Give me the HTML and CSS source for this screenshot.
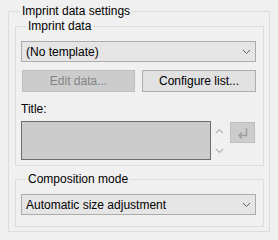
FILE: index.html
```html
<!DOCTYPE html>
<html lang="en">
  <head>
    <meta charset="UTF-8" />
    <title>Imprint data settings</title>
    <link rel="stylesheet" href="styles.css">
  </head>
  <body>
    <fieldset class="group outer">
      <legend>Imprint data settings</legend>

      <fieldset class="group inner">
        <legend>Imprint data</legend>
        <div class="combo">
          <span>(No template)</span>
          <svg class="chevron" width="9" height="6" viewBox="0 0 9 6">
            <polyline points="1,1 4.5,4.5 8,1" fill="none" stroke="#606060" stroke-width="1" />
          </svg>
        </div>

        <div class="buttons">
          <button class="btn disabled">Edit data...</button>
          <button class="btn">Configure list...</button>
        </div>

        <div class="label">Title:</div>
        <div class="title-row">
          <div class="textbox"></div>
          <div class="spin">
            <svg width="9" height="6" viewBox="0 0 9 6">
              <polyline points="1,5 4.5,1.5 8,5" fill="none" stroke="#b4b4b4" stroke-width="1.2" />
            </svg>
            <svg width="9" height="6" viewBox="0 0 9 6">
              <polyline points="1,1 4.5,4.5 8,1" fill="none" stroke="#b4b4b4" stroke-width="1.2" />
            </svg>
          </div>
          <div class="enter">
            <svg width="14" height="12" viewBox="0 0 14 12">
              <polyline points="10.5,1 10.5,8.5 3,8.5" fill="none" stroke="#9c9c9c" stroke-width="1.4" />
              <polyline points="6,5.5 3,8.5 6,11.5" fill="none" stroke="#9c9c9c" stroke-width="1.4" />
            </svg>
          </div>
        </div>
      </fieldset>

      <fieldset class="group inner compose">
        <legend>Composition mode</legend>
        <div class="combo">
          <span>Automatic size adjustment</span>
          <svg class="chevron" width="9" height="6" viewBox="0 0 9 6">
            <polyline points="1,1 4.5,4.5 8,1" fill="none" stroke="#606060" stroke-width="1" />
          </svg>
        </div>
      </fieldset>
    </fieldset>
  </body>
</html>
```

FILE: styles.css
```css
body {
  margin: 0;
  background-color: #f0f0f0;
  font-family: "Liberation Sans", Arial, sans-serif;
  font-size: 12px;
  color: #000;
}

.group {
  margin: 0;
  border: 1px solid #dcdcdc;
  min-width: 0;
}

.group legend {
  padding: 0 2px;
  margin-left: 5px;
  line-height: 14px;
}

.outer {
  margin: 4px 0 0 8px;
  width: 262px;
  box-sizing: border-box;
  padding: 1px 5px 4px 6px;
}

.inner {
  width: 249px;
  box-sizing: border-box;
  padding: 8px 7px 5px 5px;
}

.compose {
  margin-top: 6px;
  padding-bottom: 11px;
}

.combo {
  height: 21px;
  box-sizing: border-box;
  border: 1px solid #acacac;
  background-color: #e5e5e5;
  display: flex;
  align-items: center;
  justify-content: space-between;
  padding: 0 4px 0 4px;
}

.buttons {
  display: flex;
  gap: 7px;
  margin: 8px 0 0 1px;
}

.btn {
  font: inherit;
  height: 22px;
  width: 113px;
  padding: 0;
  border: 1px solid #adadad;
  background-color: #e1e1e1;
  color: #000;
}

.btn + .btn {
  width: 114px;
}

.btn.disabled {
  background-color: #cccccc;
  border-color: #bfbfbf;
  color: #838383;
}

.label {
  margin-top: 9px;
  line-height: 16px;
}

.title-row {
  display: flex;
  align-items: flex-start;
  margin-top: 4px;
}

.textbox {
  width: 190px;
  height: 39px;
  box-sizing: border-box;
  border: 1px solid #6d6d6d;
  background-color: #cccccc;
}

.spin {
  display: flex;
  flex-direction: column;
  justify-content: space-between;
  height: 26px;
  margin: 7px 0 0 4px;
}

.enter {
  width: 25px;
  height: 21px;
  box-sizing: border-box;
  margin: 1px 0 0 6px;
  border: 1px solid #bfbfbf;
  background-color: #cccccc;
  display: flex;
  align-items: center;
  justify-content: center;
}
```
